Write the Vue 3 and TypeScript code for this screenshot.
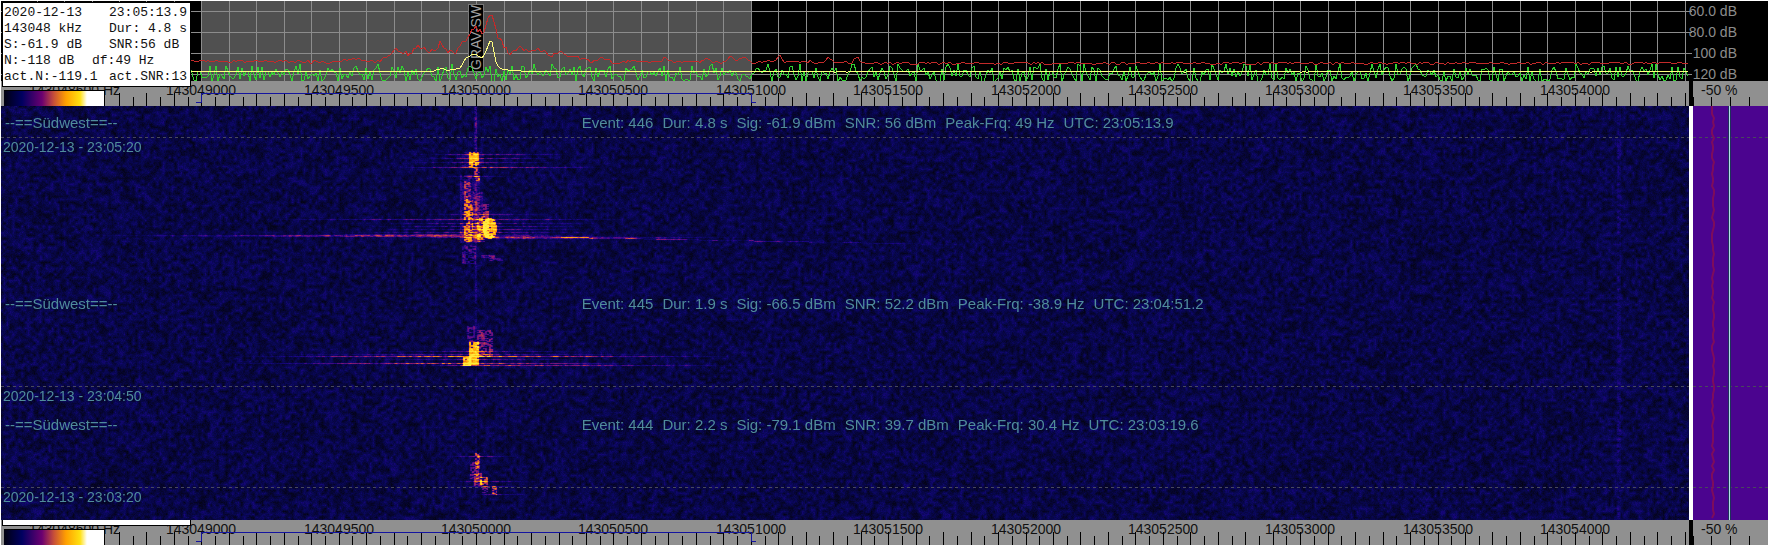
<script setup lang="ts">
import { onMounted, ref } from 'vue'

type Point = [number, number]
interface Patch { x: number; y: number; w: number; h: number; level: number; fill: number; round?: boolean }
interface Streak { y: number; x0: number; x1: number; peak: number; level: number }

const PLOT_WIDTH = 1688
const FALL_HEIGHT = 414

const info: [string, string][] = [
  ['2020-12-13', '23:05:13.9'],
  ['143048 kHz', 'Dur: 4.8 s'],
  ['S:-61.9 dB', 'SNR:56 dB'],
  ['N:-118 dB', 'df:49 Hz'],
  ['act.N:-119.1', 'act.SNR:13'],
]

const events = [
  { top: 9, fields: ['Event: 446', 'Dur: 4.8 s', 'Sig: -61.9 dBm', 'SNR: 56 dBm', 'Peak-Frq: 49 Hz', 'UTC: 23:05:13.9'] },
  { top: 190, fields: ['Event: 445', 'Dur: 1.9 s', 'Sig: -66.5 dBm', 'SNR: 52.2 dBm', 'Peak-Frq: -38.9 Hz', 'UTC: 23:04:51.2'] },
  { top: 311, fields: ['Event: 444', 'Dur: 2.2 s', 'Sig: -79.1 dBm', 'SNR: 39.7 dBm', 'Peak-Frq: 30.4 Hz', 'UTC: 23:03:19.6'] },
]
const stamps = [
  { top: 33, text: '2020-12-13 - 23:05:20' },
  { top: 282, text: '2020-12-13 - 23:04:50' },
  { top: 383, text: '2020-12-13 - 23:03:20' },
]
const timeLines = [32, 281, 382]
const levels = [
  { y: 11, text: '60.0 dB' },
  { y: 32, text: '80.0 dB' },
  { y: 53, text: '100 dB' },
  { y: 74, text: '120 dB' },
]

function freqX(hz: number): number {
  return Math.round((hz - 143049000) * 0.2747 + 200.4)
}

const gridXs: number[] = []
for (let hz = 143048400; hz <= 143054400; hz += 100) gridXs.push(freqX(hz))

const ticks: { x: number; y: number }[] = []
for (let hz = 143048700; hz <= 143054400; hz += 50) ticks.push({ x: freqX(hz), y: hz % 100 === 0 ? 12 : 16 })

const freqLabels: { x: number; text: string }[] = []
for (let hz = 143049000; hz <= 143054000; hz += 500) freqLabels.push({ x: freqX(hz), text: String(hz) })

function makeRandom(seed: number): () => number {
  let s = seed
  return () => {
    s = (s * 1664525 + 1013904223) >>> 0
    return s / 4294967296
  }
}

function curve(anchors: Point[], x: number): number {
  for (let i = 1; i < anchors.length; i++) {
    const [x0, y0] = anchors[i - 1]
    const [x1, y1] = anchors[i]
    if (x <= x1) return y0 + ((y1 - y0) * (x - x0)) / (x1 - x0)
  }
  return anchors[anchors.length - 1][1]
}

function trace(anchors: Point[], step: number, jitter: (x: number) => number): string {
  const pts: string[] = []
  for (let x = 189; x <= 1687; x += step) pts.push(`${x},${Math.round(curve(anchors, x) + jitter(x))}`)
  return pts.join(' ')
}

const rnd = makeRandom(77)
const peakAnchors: Point[] = [
  [180, 60], [290, 60], [330, 61], [350, 58], [375, 60], [389, 54], [394, 49], [402, 50], [408, 53], [415, 46],
  [422, 47], [428, 51], [434, 49], [440, 40], [446, 50], [453, 53], [462, 42], [469, 31], [475, 27], [481, 32],
  [485, 25], [488, 13], [491, 13], [493, 20], [497, 36], [503, 45], [509, 53], [517, 47], [525, 50], [540, 49],
  [550, 55], [557, 50], [565, 54], [572, 55], [580, 59], [595, 60], [600, 56], [612, 61], [640, 60], [658, 61],
  [665, 56], [672, 61], [700, 61], [705, 57], [712, 61], [724, 61], [730, 54], [736, 59], [746, 57], [752, 62],
  [776, 59], [779, 55], [783, 60], [822, 61], [827, 57], [833, 61], [850, 61], [857, 56], [862, 62], [1688, 62],
]
const averageAnchors: Point[] = [
  [180, 70], [432, 70], [440, 66], [446, 69], [459, 67], [465, 57], [473, 52], [481, 57], [485, 50], [489, 40],
  [491, 41], [495, 61], [498, 67], [510, 69], [530, 70], [1688, 70],
]
const redTrace = trace(peakAnchors, 2, (x) => (rnd() - 0.5) * (x > 375 && x < 600 ? 5 : 3))
const yellowTrace = trace(averageAnchors, 2, () => (rnd() < 0.1 ? 1 : 0))
const greenTrace = trace([[0, 71], [1688, 71]], 2, () => {
  const r = rnd()
  return r < 0.04 ? -8 : (r - 0.4) * 17
})

const snrLine = Array.from({ length: 104 }, (_, i) => `${19 + Math.round(rnd() * 2)},${i * 4}`).join(' ')

const palette: [number, number, number, number][] = [
  [0, 3, 3, 14], [0.2, 9, 7, 88], [0.3, 26, 6, 132], [0.42, 90, 12, 130], [0.56, 165, 38, 95],
  [0.72, 238, 120, 30], [0.88, 255, 175, 12], [1.15, 255, 235, 60],
]

function colour(v: number): [number, number, number] {
  const c = Math.max(0, v)
  for (let i = 1; i < palette.length; i++) {
    const a = palette[i - 1]
    const b = palette[i]
    if (c <= b[0]) {
      const t = (c - a[0]) / (b[0] - a[0])
      return [a[1] + (b[1] - a[1]) * t, a[2] + (b[2] - a[2]) * t, a[3] + (b[3] - a[3]) * t]
    }
  }
  return [255, 235, 60]
}

const patches: Patch[] = [
  { x: 473, y: 0, w: 3, h: 46, level: 0.16, fill: 0.8 },
  { x: 474, y: 0, w: 2, h: 350, level: 0.1, fill: 0.8 },
  { x: 1616, y: 0, w: 4, h: 414, level: 0.08, fill: 0.8 },
  { x: 461, y: 46, w: 22, h: 16, level: 0.14, fill: 0.7 },
  { x: 468, y: 46, w: 10, h: 15, level: 0.6, fill: 0.76 },
  { x: 473, y: 62, w: 6, h: 13, level: 0.42, fill: 0.6 },
  { x: 459, y: 69, w: 20, h: 68, level: 0.16, fill: 0.8 },
  { x: 463, y: 75, w: 7, h: 19, level: 0.32, fill: 0.6 },
  { x: 463, y: 93, w: 9, h: 43, level: 0.48, fill: 0.6 },
  { x: 472, y: 86, w: 10, h: 50, level: 0.18, fill: 0.7 },
  { x: 482, y: 98, w: 6, h: 34, level: 0.4, fill: 0.7 },
  { x: 476, y: 110, w: 8, h: 26, level: 0.44, fill: 0.6 },
  { x: 482, y: 112, w: 14, h: 21, level: 0.72, fill: 0.96, round: true },
  { x: 461, y: 139, w: 14, h: 19, level: 0.24, fill: 0.6 },
  { x: 480, y: 149, w: 14, h: 3, level: 0.26, fill: 0.8 },
  { x: 488, y: 152, w: 14, h: 3, level: 0.26, fill: 0.8 },
  { x: 466, y: 220, w: 8, h: 16, level: 0.28, fill: 0.65 },
  { x: 476, y: 224, w: 16, h: 27, level: 0.35, fill: 0.6 },
  { x: 468, y: 236, w: 10, h: 23, level: 0.74, fill: 0.94 },
  { x: 462, y: 251, w: 8, h: 9, level: 0.78, fill: 0.98 },
  { x: 474, y: 347, w: 5, h: 16, level: 0.44, fill: 0.75 },
  { x: 469, y: 356, w: 9, h: 17, level: 0.34, fill: 0.7 },
  { x: 473, y: 366, w: 8, h: 14, level: 0.36, fill: 0.7 },
  { x: 479, y: 371, w: 8, h: 8, level: 0.52, fill: 0.85 },
  { x: 481, y: 379, w: 6, h: 8, level: 0.34, fill: 0.7 },
  { x: 491, y: 380, w: 5, h: 9, level: 0.48, fill: 0.8 },
]
const streaks: Streak[] = [
  { y: 48, x0: 410, x1: 570, peak: 473, level: 0.4 },
  { y: 52, x0: 415, x1: 560, peak: 473, level: 0.4 },
  { y: 56, x0: 410, x1: 560, peak: 473, level: 0.38 },
  { y: 61, x0: 395, x1: 610, peak: 473, level: 0.62 },
  { y: 70, x0: 440, x1: 510, peak: 473, level: 0.3 },
  { y: 108, x0: 415, x1: 540, peak: 485, level: 0.3 },
  { y: 113, x0: 250, x1: 640, peak: 478, level: 0.42 },
  { y: 117, x0: 370, x1: 600, peak: 478, level: 0.36 },
  { y: 120, x0: 370, x1: 600, peak: 478, level: 0.32 },
  { y: 123, x0: 360, x1: 600, peak: 478, level: 0.32 },
  { y: 126, x0: 340, x1: 600, peak: 478, level: 0.36 },
  { y: 128, x0: 290, x1: 560, peak: 430, level: 0.34 },
  { y: 129, x0: 60, x1: 580, peak: 430, level: 0.5 },
  { y: 130, x0: 130, x1: 640, peak: 450, level: 0.42 },
  { y: 131, x0: 400, x1: 760, peak: 490, level: 0.52 },
  { y: 132, x0: 450, x1: 700, peak: 520, level: 0.3 },
  { y: 245, x0: 360, x1: 600, peak: 475, level: 0.32 },
  { y: 248, x0: 250, x1: 700, peak: 472, level: 0.3 },
  { y: 250, x0: 230, x1: 740, peak: 472, level: 0.8 },
  { y: 253, x0: 370, x1: 600, peak: 472, level: 0.36 },
  { y: 257, x0: 220, x1: 640, peak: 472, level: 0.7 },
  { y: 259, x0: 420, x1: 760, peak: 472, level: 0.6 },
  { y: 350, x0: 445, x1: 518, peak: 476, level: 0.4 },
  { y: 375, x0: 440, x1: 540, peak: 483, level: 0.35 },
  { y: 380, x0: 450, x1: 530, peak: 483, level: 0.3 },
  { y: 388, x0: 470, x1: 535, peak: 493, level: 0.32 },
]

const fall = ref<HTMLCanvasElement | null>(null)

onMounted(() => {
  const ctx = fall.value?.getContext('2d')
  if (!ctx) return
  const random = makeRandom(2020)
  const w = PLOT_WIDTH
  const h = FALL_HEIGHT
  const cell = 3
  const cols = Math.ceil(w / cell) + 2
  const rows = Math.ceil(h / cell) + 2
  const lattice = Float32Array.from({ length: cols * rows }, () => random())
  const field = new Float32Array(w * h)
  const signal = new Float32Array(w * h)

  for (let y = 0; y < h; y++) {
    const gy = Math.floor(y / cell)
    const fy = (y % cell) / cell
    for (let x = 0; x < w; x++) {
      const gx = Math.floor(x / cell)
      const fx = (x % cell) / cell
      const i = gy * cols + gx
      const top = lattice[i] * (1 - fx) + lattice[i + 1] * fx
      const low = lattice[i + cols] * (1 - fx) + lattice[i + cols + 1] * fx
      field[y * w + x] = 0.01 + (top * (1 - fy) + low * fy) * 0.21 + random() * 0.07
    }
  }

  for (const s of streaks) {
    let grain = 1
    for (let x = s.x0; x < s.x1; x++) {
      const span = x < s.peak ? s.peak - s.x0 : s.x1 - s.peak
      const near = 1 - Math.abs(x - s.peak) / span
      if (x % 3 === 0) grain = 0.5 + random() * 0.7
      signal[s.y * w + x] += s.level * near * grain
    }
  }
  for (let x = 560; x < 960; x++) {
    const y = Math.round(131 + (x - 560) / 55)
    const gap = Math.sin(x / 7) + Math.sin(x / 17) > 0 ? 1 : 0.3
    signal[y * w + x] += 0.45 * gap * (1 - (x - 560) / 480)
  }

  for (const p of patches) {
    for (let y = p.y; y < p.y + p.h; y++) {
      let on = true
      for (let x = p.x; x < p.x + p.w; x++) {
        if ((x - p.x) % 2 === 0) on = random() < p.fill
        const dx = ((x - p.x + 0.5) / p.w) * 2 - 1
        const dy = ((y - p.y + 0.5) / p.h) * 2 - 1
        if (p.round && dx * dx + dy * dy > 1) continue
        if (on) signal[y * w + x] += p.level * (0.8 + random() * 0.4)
      }
    }
  }

  // Each receiver bin leaks a little power into its neighbours.
  for (let y = 1; y < h - 1; y++) {
    for (let x = 1; x < w - 1; x++) {
      const i = y * w + x
      field[i] +=
        signal[i] * 0.56 + (signal[i - 1] + signal[i + 1]) * 0.13 + (signal[i - w] + signal[i + w]) * 0.09
    }
  }

  const image = ctx.createImageData(w, h)
  for (let i = 0; i < field.length; i++) {
    const [r, g, b] = colour(field[i])
    image.data[i * 4] = r
    image.data[i * 4 + 1] = g
    image.data[i * 4 + 2] = b
    image.data[i * 4 + 3] = 255
  }
  ctx.putImageData(image, 0, 0)
})
</script>

<template>
  <main class="monitor">
    <section class="spectrum" aria-label="Spectrum">
      <svg class="fill" shape-rendering="crispEdges">
        <rect class="band" x="200" y="0" width="550" height="80" />
        <g class="grid-line">
          <path v-for="x in gridXs" :key="x" :d="`M${x + 0.5} 0V80`" />
          <path v-for="l in levels" :key="l.y" :d="`M0 ${l.y - 0.5}H1688`" />
        </g>
        <rect class="tag-box" x="467" y="3" width="15" height="67" />
      </svg>
      <svg class="fill over">
        <text class="tag-text" transform="translate(480 69) rotate(-90)">GRAV-SW</text>
        <g class="traces" shape-rendering="crispEdges">
          <polyline class="green" :points="greenTrace" />
          <polyline class="red" :points="redTrace" />
          <polyline class="yellow" :points="yellowTrace" />
        </g>
      </svg>
      <dl class="info">
        <div v-for="row in info" :key="row[0]" class="info-row" :class="{ early: row[0] === 'N:-118 dB' }">
          <dt>{{ row[0] }}</dt>
          <dd>{{ row[1] }}</dd>
        </div>
      </dl>
    </section>

    <section class="scale" aria-label="Level scale">
      <svg class="fill">
        <g v-for="l in levels" :key="l.y">
          <path class="grid-line" :d="`M0 ${l.y - 0.5}H3`" />
          <text class="scale-text" x="48" :y="l.y + 4" text-anchor="end">{{ l.text }}</text>
        </g>
      </svg>
    </section>

    <template v-for="place in ['top', 'bottom']" :key="place">
      <div class="axis" :class="place">
        <svg class="fill">
          <text class="axis-text" x="28" y="14">143048600 Hz</text>
          <text v-for="f in freqLabels" :key="f.x" class="axis-text" :x="f.x" y="14" text-anchor="middle">{{ f.text }}</text>
          <path v-for="t in ticks" :key="t.x" class="tick" :d="`M${t.x + 0.5} ${t.y}V25`" />
          <path class="bracket" d="M195 21.500H200.500V12.500H750.500V21.500H755" />
        </svg>
        <div v-if="place === 'bottom'" class="info-edge"></div>
        <div class="colour-bar"></div>
      </div>
      <div class="side-axis" :class="place">
        <svg class="fill">
          <text class="axis-text" x="8" y="14">-50 %</text>
          <path v-for="x in [0, 18, 37, 56]" :key="x" class="tick" :d="`M${x + 0.5} 16V25`" />
        </svg>
      </div>
    </template>

    <section class="waterfall" aria-label="Waterfall">
      <canvas ref="fall" class="noise" :width="PLOT_WIDTH" :height="FALL_HEIGHT"></canvas>
      <svg class="fill over">
        <path v-for="y in timeLines" :key="y" class="time-line" :d="`M0 ${y - 0.5}H1688`" />
      </svg>
      <template v-for="e in events" :key="e.top">
        <span class="note station" :style="{ top: e.top + 'px' }">--==Südwest==--</span>
        <div class="note event" :style="{ top: e.top + 'px' }">
          <span v-for="f in e.fields" :key="f">{{ f }}</span>
        </div>
      </template>
      <time v-for="s in stamps" :key="s.top" class="note stamp" :style="{ top: s.top + 'px' }">{{ s.text }}</time>
    </section>

    <section class="history" aria-label="Level history">
      <svg class="fill">
        <path v-for="y in timeLines" :key="y" class="time-line" :d="`M0 ${y - 0.5}H76`" />
        <polyline class="history-red" :points="snrLine" />
        <path class="history-edge" d="M36.500 0V414" />
        <path class="history-line" d="M36.500 0V414" />
      </svg>
    </section>
  </main>
</template>

<style>
body {
  margin: 0;
  background: #fff;
}
</style>

<style scoped>
.monitor {
  display: grid;
  grid-template-columns: minmax(0, 1fr) 4px 75px;
  grid-template-rows: 80px 25px auto 25px;
  grid-template-areas:
    'spectrum scale scale'
    'axis gap side'
    'fall split history'
    'axis2 gap2 side2';
  padding: 1px 1px 0;
  background: linear-gradient(#000, #000) no-repeat right 76px top 1px / 4px 105px,
    linear-gradient(#000, #000) no-repeat right 76px bottom / 4px 25px, #fff;
  font-family: 'Liberation Sans', Arial, sans-serif;
  font-size: 14px;
  line-height: 16px;
  overflow: hidden;
}
.fill {
  display: block;
  width: 100%;
  height: 100%;
  overflow: hidden;
}
.over {
  position: absolute;
  inset: 0;
}
.spectrum {
  grid-area: spectrum;
  position: relative;
  background: #000;
}
.band {
  fill: #505050;
}
.grid-line {
  stroke: #8c8c8c;
  fill: none;
}
.tag-box {
  fill: #000;
  stroke: #777;
}
.tag-text {
  fill: #a0a0a0;
  font-size: 14px;
}
.traces {
  fill: none;
}
.red {
  stroke: #c42a2a;
}
.green {
  stroke: #32d232;
}
.yellow {
  stroke: #ffff80;
}
.info {
  position: absolute;
  z-index: 2;
  top: 1px;
  left: 1px;
  box-sizing: border-box;
  width: 189px;
  height: 85px;
  margin: 0;
  padding: 2px 1px;
  overflow: hidden;
  border: 1px solid #000;
  background: #fff;
  color: #111;
  font-family: 'Liberation Mono', 'Courier New', monospace;
  font-size: 13px;
}
.info-row {
  display: grid;
  grid-template-columns: 105px auto;
  white-space: pre;
}
.info-row.early {
  grid-template-columns: 88px auto;
}
.info dd {
  margin: 0;
}
.scale {
  grid-area: scale;
  background: #000;
}
.scale-text {
  fill: #8c8c8c;
}
.axis,
.side-axis {
  position: relative;
  background: #909090;
}
.axis.top {
  grid-area: axis;
}
.axis.bottom {
  grid-area: axis2;
}
.side-axis.top {
  grid-area: side;
}
.side-axis.bottom {
  grid-area: side2;
}
.axis-text {
  fill: #101010;
}
.tick {
  stroke: #000;
}
.bracket {
  fill: none;
  stroke: #1414a0;
}
.info-edge {
  position: absolute;
  top: 0;
  left: 1px;
  box-sizing: border-box;
  width: 189px;
  height: 6px;
  border: solid #000;
  border-width: 0 1px 1px;
  background: #fff;
}
.colour-bar {
  position: absolute;
  top: 9px;
  bottom: 0;
  left: 3px;
  box-sizing: border-box;
  width: 101px;
  border: solid #000;
  border-width: 1px 1px 0 0;
  background: linear-gradient(90deg, #000010, #000060 18%, #6b0070 38%, #c85038 50%, #ffa000 62%, #ffe010 76%, #fff 83%);
}
.waterfall {
  grid-area: fall;
  position: relative;
  overflow: hidden;
  background: #080648;
}
.noise {
  display: block;
  width: 100%;
  height: 414px;
}
.time-line {
  stroke: #48485c;
  stroke-dasharray: 3 3;
}
.note {
  position: absolute;
  color: #508c9b;
  white-space: pre;
}
.station {
  left: 4px;
  font-size: 15px;
}
.event {
  display: flex;
  gap: 9px;
  left: 34.4%;
  font-size: 15px;
}
.stamp {
  left: 2px;
}
.history {
  grid-area: history;
  background: #4b048f;
}
.history-red {
  fill: none;
  stroke: #7d0c5c;
  stroke-width: 2;
}
.history-edge {
  stroke: #20305c;
  stroke-width: 3;
}
.history-line {
  stroke: #b4dce8;
}
</style>
